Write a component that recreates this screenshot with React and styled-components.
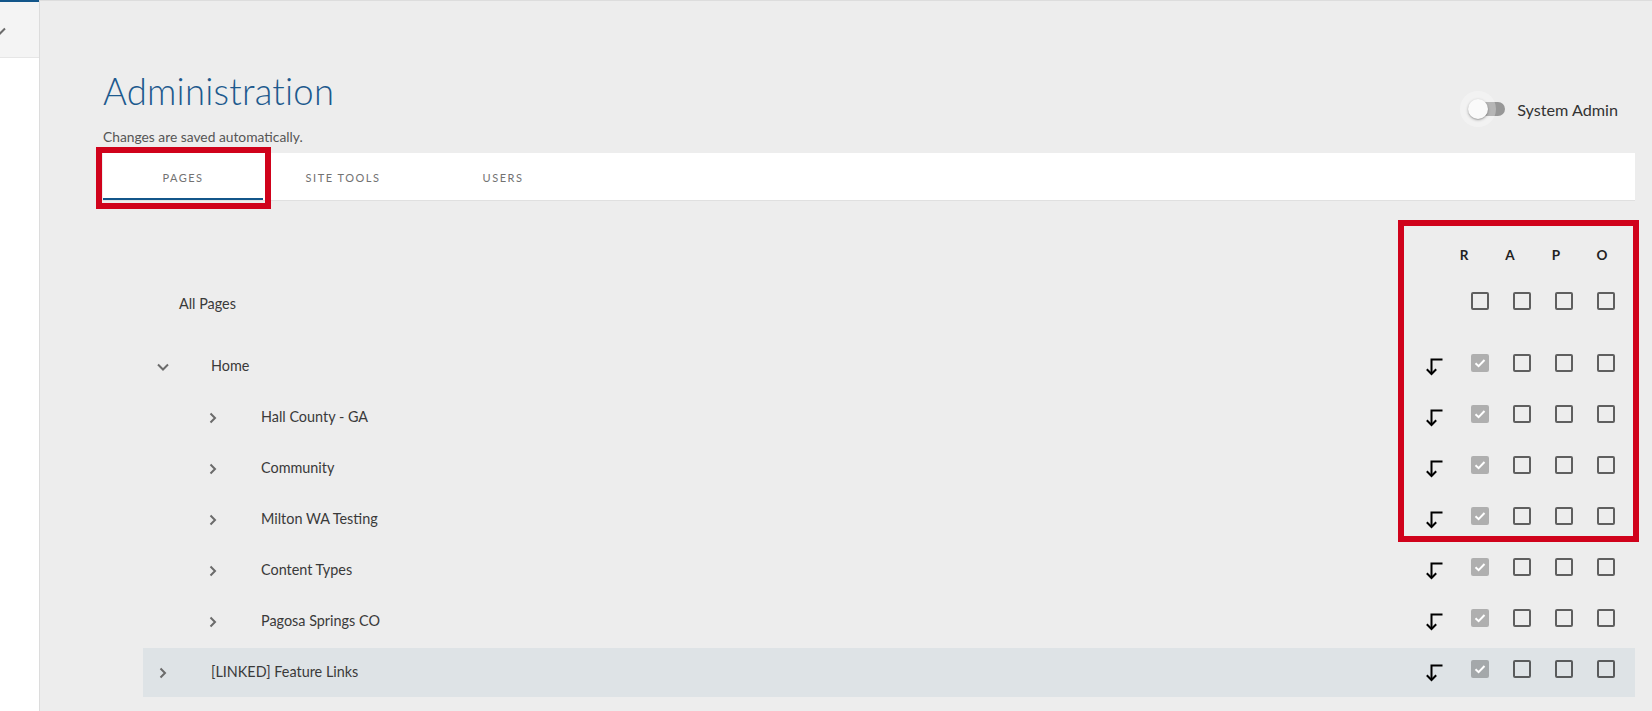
import React from 'react';
import styled, { createGlobalStyle } from 'styled-components';

const GlobalStyle = createGlobalStyle`
  html, body { margin: 0; padding: 0; }
  body {
    font-family: Lato, "Open Sans", "Liberation Sans", sans-serif;
    background: #ffffff;
    overflow: hidden;
  }
  * { box-sizing: border-box; }
`;

const pages = [
  { id: 'home', label: 'Home', level: 0, open: true },
  { id: 'hall', label: 'Hall County - GA', level: 1 },
  { id: 'community', label: 'Community', level: 1 },
  { id: 'milton', label: 'Milton WA Testing', level: 1 },
  { id: 'content', label: 'Content Types', level: 1 },
  { id: 'pagosa', label: 'Pagosa Springs CO', level: 1 },
  { id: 'linked', label: '[LINKED] Feature Links', level: 0, shaded: true },
];

const tabs = ['Pages', 'Site Tools', 'Users'];
const perms = ['R', 'A', 'P', 'O'];

function ChevronDown() {
  return (
    <svg width="12" height="12" viewBox="0 0 12 12">
      <polyline points="1,3.5 6,8.5 11,3.5" fill="none" stroke="#6b6b6b" strokeWidth="2" />
    </svg>
  );
}

function ChevronRight() {
  return (
    <svg width="12" height="12" viewBox="0 0 12 12">
      <polyline points="3.5,1.5 8,6 3.5,10.5" fill="none" stroke="#6b6b6b" strokeWidth="2" />
    </svg>
  );
}

function InheritArrow() {
  return (
    <svg width="18" height="18" viewBox="0 0 18 18">
      <path d="M17.5 1.5 H6.5 V16" fill="none" stroke="#000" strokeWidth="2" />
      <polyline points="1.8,11.3 6.5,16 11.2,11.3" fill="none" stroke="#000" strokeWidth="2" />
    </svg>
  );
}

function Check({ checked }) {
  return (
    <Box checked={checked}>
      {checked && (
        <svg width="14" height="14" viewBox="0 0 14 14">
          <polyline points="2.5,7.2 5.6,10.2 11.5,4" fill="none" stroke="#fff" strokeWidth="2" />
        </svg>
      )}
    </Box>
  );
}

export default function App() {
  return (
    <>
      <GlobalStyle />
      <Shell>
        <Sidebar>
          <SideTop>
            <SideToggle>
              <ChevronDown />
            </SideToggle>
          </SideTop>
        </Sidebar>

        <Main>
          <Header>
            <div>
              <Title>Administration</Title>
              <Subtitle>Changes are saved automatically.</Subtitle>
            </div>
            <SwitchGroup>
              <Switch>
                <Track />
                <Halo />
                <Knob />
              </Switch>
              <SwitchLabel>System Admin</SwitchLabel>
            </SwitchGroup>
          </Header>

          <TabBar>
            {tabs.map((t, i) => (
              <Tab key={t} active={i === 0}>
                {t}
                {i === 0 && <Highlight />}
              </Tab>
            ))}
          </TabBar>

          <Tree>
            <PermHeader>
              {perms.map((p) => (
                <PermLetter key={p}>{p}</PermLetter>
              ))}
            </PermHeader>

            <AllRow>
              <AllLabel>All Pages</AllLabel>
              <Boxes>
                {perms.map((p) => (
                  <Check key={p} />
                ))}
              </Boxes>
            </AllRow>

            {pages.map((pg) => (
              <PageRow key={pg.id} shaded={pg.shaded}>
                <Expand level={pg.level}>
                  {pg.open ? <ChevronDown /> : <ChevronRight />}
                </Expand>
                <PageLabel>{pg.label}</PageLabel>
                <Rights>
                  <InheritArrow />
                  <Boxes>
                    {perms.map((p, i) => (
                      <Check key={p} checked={i === 0} />
                    ))}
                  </Boxes>
                </Rights>
              </PageRow>
            ))}

            <Highlight area />
          </Tree>
        </Main>
      </Shell>
    </>
  );
}

const Shell = styled.div`
  display: flex;
  height: 100vh;
`;

const Sidebar = styled.aside`
  width: 40px;
  flex: none;
  background: #ffffff;
  border-right: 1px solid #dcdcdc;
  overflow: hidden;
`;

const SideTop = styled.div`
  height: 58px;
  background: #f4f4f4;
  border-top: 2px solid #13568a;
  border-bottom: 1px solid #e6e6e6;
  position: relative;
`;

const SideToggle = styled.div`
  position: absolute;
  left: -6px;
  top: 23px;
  width: 12px;
  height: 12px;
  display: flex;
`;

const Main = styled.main`
  flex: 1;
  background: #ededed;
  border-top: 1px solid #dddddd;
  padding: 69px 17px 0 63px;
  min-width: 0;
`;

const Header = styled.header`
  display: flex;
  justify-content: space-between;
  align-items: flex-start;
`;

const Title = styled.h1`
  margin: 0;
  font-family: Lato, "Liberation Sans", sans-serif;
  font-weight: 300;
  font-size: 36.5px;
  line-height: 1.2;
  color: #1d5a8e;
  letter-spacing: 0.2px;
`;

const Subtitle = styled.p`
  margin: 15px 0 0;
  font-size: 13.8px;
  line-height: 1.2;
  color: #555555;
`;

const SwitchGroup = styled.div`
  display: flex;
  align-items: center;
  margin-top: 29px;
  padding-right: 17px;
  gap: 12px;
`;

const Switch = styled.div`
  position: relative;
  width: 37px;
  height: 20px;
  margin-left: 8px;
`;

const Track = styled.div`
  position: absolute;
  left: 3px;
  top: 3px;
  width: 34px;
  height: 14px;
  border-radius: 7px;
  background: #979797;
`;

const Halo = styled.div`
  position: absolute;
  left: -8px;
  top: -8px;
  width: 36px;
  height: 36px;
  border-radius: 50%;
  background: rgba(255, 255, 255, 0.3);
`;

const Knob = styled.div`
  position: absolute;
  left: 0;
  top: 0;
  width: 20px;
  height: 20px;
  border-radius: 50%;
  background: #fafafa;
  box-shadow: 0 1px 3px rgba(0, 0, 0, 0.3), 0 1px 1px rgba(0, 0, 0, 0.12);
`;

const SwitchLabel = styled.span`
  font-size: 16.2px;
  color: #333333;
`;

const TabBar = styled.nav`
  display: flex;
  margin-top: 8px;
  height: 48px;
  background: #ffffff;
  border-bottom: 1px solid #e0e0e0;
`;

const Tab = styled.div`
  position: relative;
  width: 160px;
  display: flex;
  align-items: center;
  justify-content: center;
  padding-top: 2px;
  text-transform: uppercase;
  font-size: 11px;
  letter-spacing: 1.5px;
  color: #727272;
  box-shadow: ${(p) => (p.active ? 'inset 0 -2px 0 #13568a' : 'none')};
`;

const Highlight = styled.div`
  position: absolute;
  border: 6px solid #d0021b;
  pointer-events: none;
  ${(p) =>
    p.area
      ? `top: 19px; right: -4px; width: 241px; height: 322px;`
      : `top: -6px; left: -7px; right: -8px; bottom: -9px;`}
`;

const Tree = styled.section`
  position: relative;
  margin-left: 40px;
  padding-top: 40px;
`;

const PermHeader = styled.div`
  display: flex;
  justify-content: flex-end;
  height: 30px;
  padding-right: 10px;
  margin-bottom: 9px;
`;

const PermLetter = styled.div`
  width: 46px;
  display: flex;
  align-items: center;
  justify-content: center;
  padding-bottom: 2px;
  font-size: 13.5px;
  font-weight: 700;
  color: #222222;
`;

const AllRow = styled.div`
  display: flex;
  align-items: center;
  height: 49px;
  padding: 0 20px 0 36px;
  margin-bottom: 13px;
`;

const AllLabel = styled.span`
  flex: 1;
  font-size: 14.4px;
  color: #3a3a3a;
  margin-bottom: 2px;
`;

const PageRow = styled.div`
  display: flex;
  align-items: center;
  height: 49px;
  margin-bottom: 2px;
  padding-right: 20px;
  background: ${(p) => (p.shaded ? '#dee3e6' : 'transparent')};
`;

const Expand = styled.div`
  width: 40px;
  margin-left: ${(p) => p.level * 50}px;
  display: flex;
  justify-content: center;
  align-items: center;
  flex: none;
`;

const PageLabel = styled.span`
  flex: 1;
  margin-left: 28px;
  margin-bottom: 2px;
  font-size: 14.4px;
  color: #3a3a3a;
`;

const Rights = styled.div`
  display: flex;
  align-items: center;
  svg { display: block; }
`;

const Boxes = styled.div`
  display: flex;
  gap: 24px;
  margin-left: 28px;
  margin-bottom: 7px;
`;

const Box = styled.div`
  width: 18px;
  height: 18px;
  border-radius: 2px;
  display: flex;
  align-items: center;
  justify-content: center;
  border: ${(p) => (p.checked ? 'none' : '2px solid rgba(0, 0, 0, 0.6)')};
  background: ${(p) => (p.checked ? 'rgba(0, 0, 0, 0.26)' : 'transparent')};
`;
